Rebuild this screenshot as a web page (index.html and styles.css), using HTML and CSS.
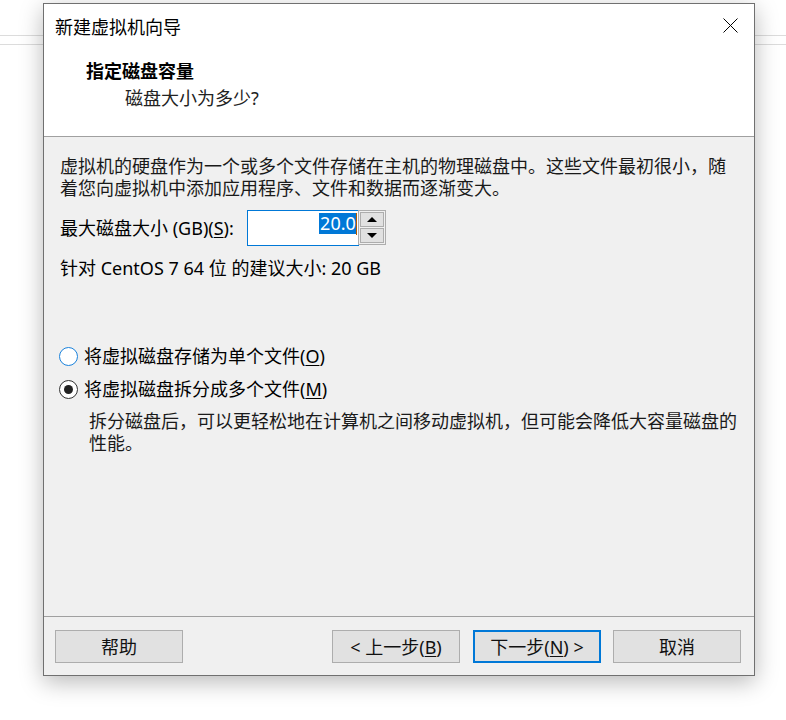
FILE: index.html
```html
<!DOCTYPE html>
<html lang="zh-CN">
<head>
<meta charset="utf-8">
<title>新建虚拟机向导</title>
<link rel="stylesheet" href="styles.css">
</head>
<body>
<div class="dialog">
  <div class="titlebar">
    <span class="title">新建虚拟机向导</span>
    <span class="close" aria-label="关闭">
      <svg width="15" height="15" viewBox="0 0 15 15"><path d="M0.5 0.5 L14.5 14.5 M14.5 0.5 L0.5 14.5" stroke="#000" stroke-width="1" fill="none"/></svg>
    </span>
  </div>
  <div class="header">
    <div class="h-title">指定磁盘容量</div>
    <div class="h-sub">磁盘大小为多少?</div>
  </div>
  <div class="content">
    <p class="intro">虚拟机的硬盘作为一个或多个文件存储在主机的物理磁盘中。这些文件最初很小，随着您向虚拟机中添加应用程序、文件和数据而逐渐变大。</p>
    <div class="size-row">
      <span class="size-label">最大磁盘大小 (GB)(<u>S</u>):</span>
      <div class="spin">
        <div class="spin-input"><span class="sel">20.0</span><span class="caret"></span></div>
        <div class="spin-btns">
          <div class="spin-btn"><span class="tri-up"></span></div>
          <div class="spin-btn"><span class="tri-down"></span></div>
        </div>
      </div>
    </div>
    <p class="rec">针对 CentOS 7 64 位 的建议大小: 20 GB</p>
    <div class="radio-row first">
      <span class="radio focus"></span>
      <span class="radio-text">将虚拟磁盘存储为单个文件(<u>O</u>)</span>
    </div>
    <div class="radio-row">
      <span class="radio checked"></span>
      <span class="radio-text">将虚拟磁盘拆分成多个文件(<u>M</u>)</span>
    </div>
    <p class="desc">拆分磁盘后，可以更轻松地在计算机之间移动虚拟机，但可能会降低大容量磁盘的性能。</p>
  </div>
  <div class="footer">
    <div class="btn">帮助</div>
    <div class="btn back">&lt; 上一步(<u>B</u>)</div>
    <div class="btn primary">下一步(<u>N</u>) &gt;</div>
    <div class="btn">取消</div>
  </div>
</div>
</body>
</html>
```
FILE: styles.css
```css
* { box-sizing: border-box; }
html, body { margin: 0; padding: 0; }
body {
  width: 786px;
  height: 720px;
  overflow: hidden;
  background-color: #ffffff;
  background-image:
    linear-gradient(#dcdcdc, #dcdcdc),
    linear-gradient(#dcdcdc, #dcdcdc);
  background-size: 100% 1px, 100% 1px;
  background-position: 0 35px, 0 44px;
  background-repeat: no-repeat;
  font-family: "Noto Sans", "Noto Sans CJK SC", sans-serif;
  font-size: 18px;
  color: #000;
}
.dialog {
  margin: 3px 0 0 43px;
  width: 712px;
  height: 673px;
  border: 1px solid #707070;
  background: #f0f0f0;
  display: flex;
  flex-direction: column;
  box-shadow: 0 6px 22px rgba(0, 0, 0, 0.28);
}
.titlebar {
  height: 44px;
  background: #fff;
  display: flex;
  align-items: center;
  justify-content: space-between;
  padding-left: 11px;
}
.title {
  font-family: "Noto Sans CJK SC", sans-serif;
  font-size: 18px;
  line-height: 44px;
}
.close {
  display: flex;
  margin-right: 16px;
  margin-top: -2px;
}
.header {
  height: 89px;
  background: #fff;
  border-bottom: 1px solid #a0a0a0;
  padding-top: 11px;
}
.h-title {
  padding-left: 42px;
  font-family: "Noto Sans CJK SC", sans-serif;
  font-weight: bold;
  line-height: 22px;
}
.h-sub {
  padding-left: 81px;
  margin-top: 6px;
  line-height: 22px;
  color: #222;
}
.content {
  flex: 1;
  padding: 18px 14px 0 16px;
  line-height: 22px;
}
.content p { margin: 0; }
.intro { color: #1a1a1a; }
.size-row {
  margin-top: 11px;
  height: 36px;
  display: flex;
  align-items: center;
}
.size-label { margin-right: 13px; }
.spin { display: flex; height: 36px; }
.spin-input {
  width: 112px;
  height: 36px;
  border: 1px solid #0078d7;
  background: #fff;
  display: flex;
  justify-content: flex-end;
  align-items: flex-start;
  padding: 2px 1px 0 0;
}
.sel {
  background: #0078d7;
  color: #fff;
  line-height: 21px;
  height: 21px;
  padding: 0 0 0 1px;
}
.caret {
  width: 1px;
  height: 22px;
  background: #b35a00;
}
.spin-btns {
  width: 28px;
  height: 35px;
  margin-left: -1px;
  border: 1px solid #adadad;
  background: #f0f0f0;
  padding: 1px;
  display: flex;
  flex-direction: column;
  gap: 1px;
}
.spin-btn {
  flex: 1;
  border: 1px solid #adadad;
  background: #e1e1e1;
  display: flex;
  align-items: center;
  justify-content: center;
}
.tri-up {
  width: 0; height: 0;
  border-left: 5px solid transparent;
  border-right: 5px solid transparent;
  border-bottom: 5px solid #000;
}
.tri-down {
  width: 0; height: 0;
  border-left: 5px solid transparent;
  border-right: 5px solid transparent;
  border-top: 5px solid #000;
}
.rec { margin-top: 11px !important; }
.radio-row {
  display: flex;
  align-items: center;
  height: 22px;
  margin-top: 11px;
}
.radio-row.first { margin-top: 66px; }
.radio {
  width: 19px;
  height: 19px;
  border-radius: 50%;
  border: 1px solid #333;
  background: #fff;
  margin-left: -1px;
  margin-right: 6px;
  display: flex;
  align-items: center;
  justify-content: center;
  flex: none;
}
.radio.focus { border: 1.5px solid #1a82dc; }
.radio.checked::after {
  content: "";
  width: 9px;
  height: 9px;
  border-radius: 50%;
  background: #222;
}
.desc {
  margin-top: 10px !important;
  padding-left: 29px;
  color: #1a1a1a;
}
.footer {
  border-top: 1px solid #a0a0a0;
  padding: 13px 13px 12px 11px;
  display: flex;
  gap: 12px;
}
.btn {
  width: 128px;
  height: 33px;
  border: 1px solid #adadad;
  background: #e1e1e1;
  display: flex;
  align-items: center;
  justify-content: center;
  line-height: 22px;
  color: #111;
}
.btn.back { margin-left: auto; margin-right: 1px; }
.btn.primary { border: 2px solid #0078d7; }
u { text-underline-offset: 2px; }
```
